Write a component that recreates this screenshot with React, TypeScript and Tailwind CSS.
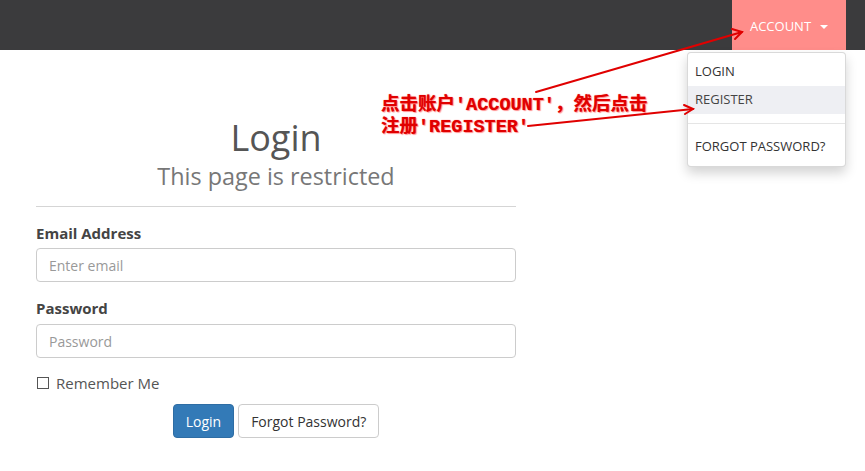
import React from "react";

export default function App() {
  return (
    <div
      className="relative w-[865px] h-[471px] overflow-hidden bg-white text-[#333]"
      style={{ fontFamily: '"Open Sans", "Noto Sans", sans-serif' }}
    >
      {/* Navbar */}
      <div className="h-[50px] bg-[#3b3b3d] flex justify-end pr-[19px]">
        <div className="relative">
          <button className="h-[50px] w-[114px] bg-[#ff8d8a] text-white text-[13px] flex items-center justify-center gap-[9px] pt-[3px]">
            <span>ACCOUNT</span>
            <span className="w-0 h-0 border-l-[4px] border-r-[4px] border-t-[4px] border-l-transparent border-r-transparent border-t-white mt-[1px]" />
          </button>
          {/* Dropdown */}
          <div className="absolute right-0 top-[52px] w-[159px] bg-white border border-[rgba(0,0,0,0.15)] rounded-[4px] shadow-[0_6px_12px_rgba(0,0,0,0.175)] py-[5px] text-[13px] text-[#333] z-10">
            <div className="h-[28px] flex items-center px-[7px]">LOGIN</div>
            <div className="h-[28px] flex items-center px-[7px] bg-[#eeeff3] text-[#444]">REGISTER</div>
            <div className="h-px bg-[#e5e5e5] my-[9px]" />
            <div className="h-[28px] flex items-center px-[7px]">FORGOT PASSWORD?</div>
          </div>
        </div>
      </div>

      {/* Content */}
      <div className="pl-[36px]">
        <div className="w-[480px] flex flex-col">
          <h1 className="text-center text-[36px] leading-[40px] text-[#555] mt-[68px]">Login</h1>
          <h2 className="text-center text-[23.4px] leading-[28px] text-[#777] mt-[4px]">This page is restricted</h2>
          <div className="h-px bg-[#d5d5d5] mt-[16px]" />
          <label className="font-bold text-[15px] leading-[20px] text-[#444] mt-[16px]">Email Address</label>
          <div className="mt-[5px] h-[34px] border border-[#ccc] rounded-[4px] flex items-center px-[12px] text-[14px] text-[#999]">
            Enter email
          </div>
          <label className="font-bold text-[15px] leading-[20px] text-[#444] mt-[16px]">Password</label>
          <div className="mt-[6px] h-[34px] border border-[#ccc] rounded-[4px] flex items-center px-[12px] text-[14px] text-[#999]">
            Password
          </div>
          <div className="mt-[15px] flex items-center gap-[7px] h-[20px]">
            <span className="w-[12px] h-[12px] border border-[#555] ml-[1px]" />
            <span className="text-[15px] text-[#555]">Remember Me</span>
          </div>
          <div className="mt-[11px] flex justify-center gap-[4px]">
            <button className="h-[34px] px-[12px] bg-[#337ab7] border border-[#2e6da4] rounded-[4px] text-white text-[14px]">
              Login
            </button>
            <button className="h-[34px] px-[12px] bg-white border border-[#ccc] rounded-[4px] text-[#333] text-[14px]">
              Forgot Password?
            </button>
          </div>
        </div>
      </div>

      {/* Annotation */}
      <div
        className="absolute left-[381px] top-[95px] text-[18.5px] leading-[22px] font-bold text-[#e00000] z-20"
        style={{
          fontFamily: '"Liberation Mono", "Noto Sans CJK SC", monospace',
          textShadow: "0 0 1px #ff4040, 1px 1px 1px rgba(255,0,0,0.4)",
        }}
      >
        <div>点击账户'ACCOUNT'，然后点击</div>
        <div>注册'REGISTER'</div>
      </div>
      <svg className="absolute left-0 top-0 z-30 pointer-events-none" width="865" height="471">
        <g stroke="#e00000" strokeWidth="2" fill="none" strokeLinecap="round">
          <line x1="536" y1="92" x2="742" y2="32" />
          <polyline points="732,29 742,32 735,39" />
          <line x1="528" y1="126" x2="693" y2="109" />
          <polyline points="684,105 693,109 685,114" />
        </g>
      </svg>
    </div>
  );
}
